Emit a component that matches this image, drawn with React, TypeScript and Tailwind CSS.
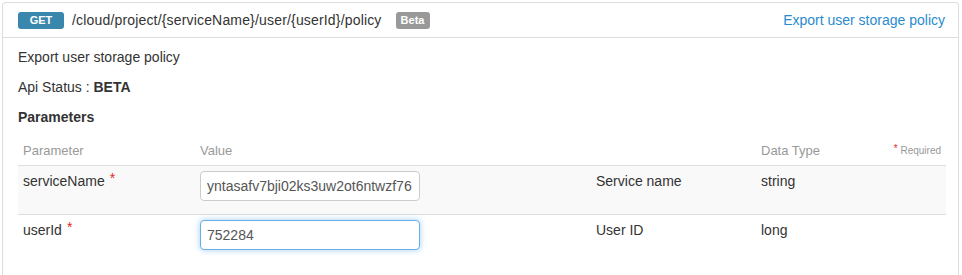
import React from 'react';

const font = { fontFamily: '"Liberation Sans", Arial, sans-serif' };

type Param = {
  name: string;
  value: string;
  description: string;
  type: string;
  focused?: boolean;
};

const params: Param[] = [
  { name: 'serviceName', value: 'yntasafv7bji02ks3uw2ot6ntwzf76', description: 'Service name', type: 'string' },
  { name: 'userId', value: '752284', description: 'User ID', type: 'long', focused: true },
];

function ParamRow({ p, striped, last }: { p: Param; striped: boolean; last: boolean }) {
  return (
    <div
      className={`grid grid-cols-[177px_396px_165px_1fr_80px] h-[49px] text-[14px] leading-[20px] text-[#333333] ${
        striped ? 'bg-[#f9f9f9]' : 'bg-white'
      } ${last ? '' : 'border-b border-[#dddddd]'}`}
    >
      <div className="pl-[5px] pt-[5px]">
        {p.name}
        <span className="ml-[5px] relative -top-[3px] text-[#e4261f]">*</span>
      </div>
      <div className="pl-[5px] pt-[5px]">
        <input
          readOnly
          value={p.value}
          style={font}
          className={`w-[220px] h-[30px] rounded-[4px] border bg-white px-[6px] text-[14px] text-[#555555] outline-none ${
            p.focused
              ? 'border-[#66afe9] shadow-[0_0_6px_rgba(102,175,233,0.6)]'
              : 'border-[#cccccc]'
          }`}
        />
      </div>
      <div className="pl-[5px] pt-[5px]">{p.description}</div>
      <div className="pl-[5px] pt-[5px]">{p.type}</div>
      <div />
    </div>
  );
}

export default function App() {
  return (
    <div className="bg-white min-h-[275px] pt-[2px] pl-[2px]" style={font}>
      <div className="w-[957px] h-[273px] border-x border-t border-[#dddddd] rounded-t-[4px] overflow-hidden">
        {/* header */}
        <div className="h-[35px] flex items-center justify-between border-b border-[#dddddd] pl-[15px] pr-[13px]">
          <div className="flex items-center">
            <span className="w-[46px] h-[17px] flex items-center justify-center rounded-[3px] bg-[#3a87ad] text-white text-[11px] font-bold">
              GET
            </span>
            <span className="ml-[8px] text-[14px] tracking-[0.17px] text-[#333333]">
              /cloud/project/{'{serviceName}'}/user/{'{userId}'}/policy
            </span>
            <span className="ml-[14px] w-[34px] h-[17px] flex items-center justify-center rounded-[3px] bg-[#999999] text-white text-[11px] font-bold">
              Beta
            </span>
          </div>
          <a className="text-[14px] text-[#2a8bd0] cursor-pointer">Export user storage policy</a>
        </div>

        {/* body */}
        <div className="pt-[9px] pl-[15px] pr-[12px] text-[14px] leading-[20px] text-[#333333]">
          <p className="mb-[10px]">Export user storage policy</p>
          <p className="mb-[10px]">
            Api Status : <b>BETA</b>
          </p>
          <h3 className="font-bold">Parameters</h3>

          <div className="mt-[5px]">
            <div className="grid grid-cols-[177px_396px_165px_1fr_80px] border-b border-[#dddddd] pt-[9px] pb-[4px] text-[13px] leading-[20px] text-[#999999]">
              <div className="pl-[5px]">Parameter</div>
              <div className="pl-[5px]">Value</div>
              <div />
              <div className="pl-[5px]">Data Type</div>
              <div className="pr-[5px] text-right text-[10px]">
                <span className="text-[#e4261f] relative -top-[2px]">*</span> Required
              </div>
            </div>
            {params.map((p, i) => (
              <ParamRow key={p.name} p={p} striped={i % 2 === 0} last={i === params.length - 1} />
            ))}
          </div>
        </div>
      </div>
    </div>
  );
}
